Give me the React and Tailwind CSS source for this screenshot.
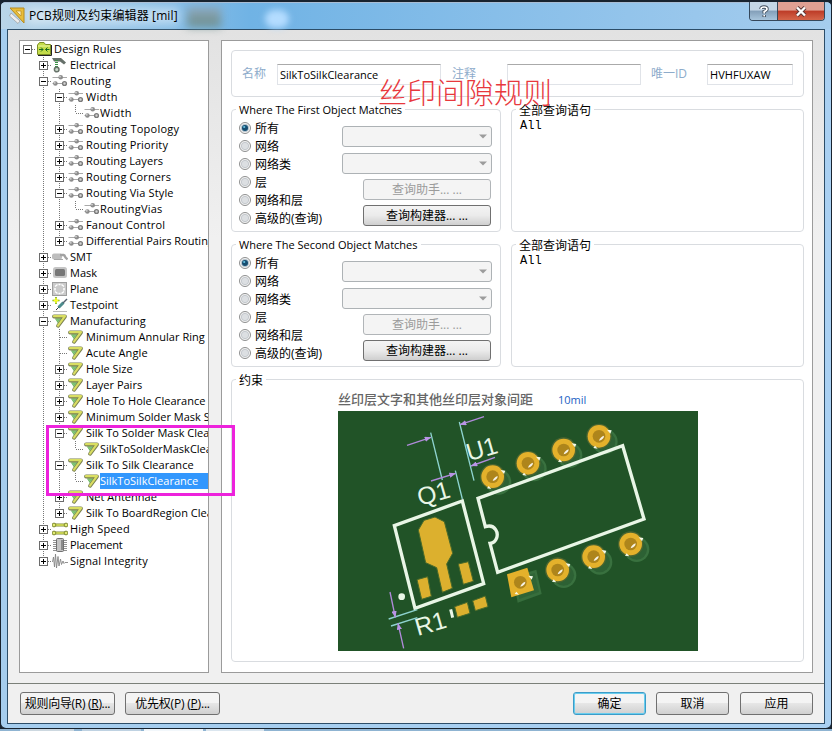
import React from "react";

const UI = "font-['Open_Sans','Noto_Sans_CJK_SC',sans-serif]";

/* [level, expander, icon, label, tracking class, selected] */
const rows = [
  [0, "-", "folder", "Design Rules", "tracking-[0.15px]"],
  [1, "+", "elec", "Electrical", ""],
  [1, "-", "route", "Routing", "tracking-[0.25px]"],
  [2, "-", "route", "Width", "tracking-[0.3px]"],
  [3, "", "route", "Width", "tracking-[0.3px]"],
  [2, "+", "route", "Routing Topology", "tracking-[0.25px]"],
  [2, "+", "route", "Routing Priority", "tracking-[0.15px]"],
  [2, "+", "route", "Routing Layers", "tracking-[0.1px]"],
  [2, "+", "route", "Routing Corners", "tracking-[0.13px]"],
  [2, "-", "route", "Routing Via Style", "tracking-[0.15px]"],
  [3, "", "route", "RoutingVias", "tracking-[0.2px]"],
  [2, "+", "route", "Fanout Control", "tracking-[0.18px]"],
  [2, "+", "route", "Differential Pairs Routing", ""],
  [1, "+", "smt", "SMT", ""],
  [1, "+", "mask", "Mask", ""],
  [1, "+", "plane", "Plane", ""],
  [1, "+", "test", "Testpoint", ""],
  [1, "-", "mfg", "Manufacturing", "tracking-[0.05px]"],
  [2, "", "mfg", "Minimum Annular Ring", "tracking-[0.05px]"],
  [2, "", "mfg", "Acute Angle", "tracking-[0.1px]"],
  [2, "+", "mfg", "Hole Size", ""],
  [2, "+", "mfg", "Layer Pairs", ""],
  [2, "+", "mfg", "Hole To Hole Clearance", ""],
  [2, "+", "mfg", "Minimum Solder Mask Sliver", ""],
  [2, "-", "mfg", "Silk To Solder Mask Clearance", ""],
  [3, "", "mfg", "SilkToSolderMaskClearance", ""],
  [2, "-", "mfg", "Silk To Silk Clearance", "tracking-[0.04px]"],
  [3, "", "mfg", "SilkToSilkClearance", "", true],
  [2, "+", "mfg", "Net Antennae", ""],
  [2, "+", "mfg", "Silk To BoardRegion Clearance", ""],
  [1, "+", "speed", "High Speed", "tracking-[0.15px]"],
  [1, "+", "place", "Placement", "tracking-[-0.15px]"],
  [1, "+", "signal", "Signal Integrity", "tracking-[0.12px]"],
];

const continues = (i, level) => {
  for (let k = i + 1; k < rows.length; k++) {
    if (rows[k][0] < level) return false;
    if (rows[k][0] === level) return true;
  }
  return false;
};

function Guide({ up, down, across, box }) {
  return (
    <svg width="16" height="16" viewBox="0 0 16 16" className="shrink-0" shapeRendering="crispEdges">
      {up && <path d="M7.5 0V8" stroke="#777" strokeDasharray="1 1" />}
      {down && <path d="M7.5 8V16" stroke="#777" strokeDasharray="1 1" />}
      {across && <path d="M8 8.5H16" stroke="#777" strokeDasharray="1 1" />}
      {box && (
        <>
          <rect x="3.5" y="4.5" width="8" height="8" fill="#fff" stroke="#6b6b6b" />
          <path d="M5 8.5H10" stroke="#000" />
          {box === "+" && <path d="M7.5 6V11" stroke="#000" />}
        </>
      )}
    </svg>
  );
}

function TreeIcon({ kind }) {
  return (
    <svg width="16" height="16" viewBox="0 0 16 16" className="shrink-0">
      {kind === "folder" && (
        <>
          <path d="M.5 4L2.500 1.500H7L8.500 3.500H13.500V13.500H.5Z" fill="#c3dc4a" stroke="#7d8f24" />
          <path d="M1 5H13" stroke="#eef9a0" />
          <path d="M14.500 4V14.500H1" stroke="#222" fill="none" />
          <path d="M2 8.500H6M12.500 8.500H8.500M4 6.500L6 8.500L4 10.500M10.500 6.500L8.500 8.500L10.500 10.500" stroke="#176a1c" fill="none" />
        </>
      )}
      {kind === "elec" && (
        <>
          <path d="M0 1H9L14 5.500L12 7.500L8 4.500H2Z" fill="#66706a" />
          <path d="M4.500 3V10" stroke="#379343" strokeWidth="3" strokeDasharray="1 1" />
          <circle cx="4.700" cy="12.500" r="2.300" fill="#c9d8ca" stroke="#68736a" strokeWidth="1.500" />
        </>
      )}
      {kind === "route" && (
        <>
          <path d="M.5 4.500H15M.5 10.500H15" stroke="#a9a9a9" />
          <circle cx="8.700" cy="4.300" r="2.300" fill="#8c8c8c" />
          <circle cx="8" cy="3.600" r=".9" fill="#d4d4d4" />
          <circle cx="3.400" cy="10.500" r="2.300" fill="#8c8c8c" />
          <circle cx="2.800" cy="9.800" r=".9" fill="#d4d4d4" />
          <circle cx="12.500" cy="10.500" r="1.900" fill="#d4d4d4" stroke="#7b7b7b" strokeWidth="1.400" />
        </>
      )}
      {kind === "smt" && (
        <>
          <rect x="0" y="4.500" width="10" height="6" rx="2" fill="#bdbdbd" />
          <path d="M8 6H11.500Q13 6.500 13.500 8.500L15.500 10.500" fill="none" stroke="#a2a2a2" strokeWidth="2.400" />
          <path d="M2 10.500H11" stroke="#a6a6a6" />
        </>
      )}
      {kind === "mask" && (
        <>
          <rect x="1" y="2" width="14" height="11" rx="2.500" fill="#c5c5c5" />
          <rect x="3" y="4" width="10" height="7" rx="1.500" fill="#777" />
        </>
      )}
      {kind === "plane" && (
        <>
          <rect x=".5" y="1.500" width="14" height="13" fill="#cacaca" stroke="#9e9e9e" />
          <path d="M5.500 3.500L3 5.500M3 7V9.500M3 10.500L5.500 12.500M9.500 3.500L12 5.500M12 7V9.500M12 10.500L9.500 12.500M6.500 3.500H8.500M6.500 12.500H8.500" fill="none" stroke="#fff" strokeWidth="1.500" />
        </>
      )}
      {kind === "test" && (
        <>
          <path d="M1 14.500H15" stroke="#bbb" />
          <path d="M4 13L7 10" stroke="#333" />
          <path d="M6.500 10.500L11.500 5.500" stroke="#4d8c8d" strokeWidth="3" />
          <path d="M11 6L15 2" stroke="#56606e" strokeWidth="1.500" />
          <path d="M4 0V7M.5 3.500H7.500" stroke="#62a900" strokeWidth="1.500" />
          <path d="M4 1V6M1.500 3.500H6.500" stroke="#ffff25" strokeWidth="1.500" />
        </>
      )}
      {kind === "mfg" && (
        <>
          <path d="M3 5H11L6 11Z" fill="#8fce82" />
          <path d="M2 3.500H13L6 12.800" fill="none" stroke="#7b8052" strokeWidth="3.800" strokeLinecap="round" strokeLinejoin="round" />
          <path d="M2 3.200H13L6 12.600" fill="none" stroke="#d9de62" strokeWidth="2.200" strokeLinecap="round" strokeLinejoin="round" />
          <path d="M3.500 6L6 9M5.500 6L7.200 8M7.500 6L8.500 7" stroke="#5fae5c" strokeWidth=".7" />
        </>
      )}
      {kind === "speed" && (
        <>
          <path d="M2 4H14M2 12H14" stroke="#7e8832" strokeWidth="3" />
          <path d="M2 4H14M2 12H14" stroke="#dbe65c" strokeWidth="1.600" />
          {[[2, 4], [14, 4], [2, 12], [14, 12]].map(([x, y]) => (
            <circle key={x + "-" + y} cx={x} cy={y} r="1.900" fill="#e2ec74" stroke="#7e8832" />
          ))}
        </>
      )}
      {kind === "place" && (
        <>
          <path d="M1 3.500H15M1 5.500H15M1 7.500H15M1 9.500H15M1 11.500H15M1 13.500H15" stroke="#777" strokeWidth=".8" />
          <rect x="4.500" y="1.500" width="7" height="13" rx="1" fill="#c4c4c4" stroke="#717171" />
          <path d="M10 3V13" stroke="#8b8b8b" strokeWidth="2" />
        </>
      )}
      {kind === "signal" && (
        <path d="M.5 9L1.500 4L2.500 14L3.500 1L4.500 15L6 3.500L7 13L8.500 6L9.500 11.500L11 8L12 10.500L13 9.500H16" fill="none" stroke="#858585" strokeWidth=".9" />
      )}
    </svg>
  );
}

function TreeRow({ row, index }) {
  const [level, box, icon, label, tracking, selected] = row;
  const ancestors = [];
  for (let l = 1; l < level; l++) ancestors.push(l);
  const tone = selected ? "h-4 w-[120px] bg-[#3297fd] text-white" : "text-black";
  const indent = level === 3 ? "" : level === 0 ? "pl-px" : "pl-0.5";
  return (
    <div className="flex h-4 w-[300px] items-center">
      {level > 0 && <span className="w-4 shrink-0" />}
      {ancestors.map((l) => (
        <Guide key={l} up={continues(index, l)} down={continues(index, l)} />
      ))}
      <Guide up={level > 0} down={level > 0 && continues(index, level)} across box={box} />
      {level === 0 && <span className="w-px shrink-0" />}
      <TreeIcon kind={icon} />
      <span className={"text-[11px] leading-4 whitespace-nowrap " + tone + " " + indent + " " + tracking}>{label}</span>
    </div>
  );
}

function Group({ title, className, children }) {
  return (
    <div className={"relative rounded-[4px] border border-[#d9dce0] " + className}>
      {title && (
        <span className="absolute -top-2 left-[4px] bg-white px-[3px] text-[11px] leading-4 whitespace-nowrap text-black">
          {title}
        </span>
      )}
      {children}
    </div>
  );
}

function Radio({ label, checked }) {
  return (
    <div className="flex h-[18px] items-center gap-[4px]">
      <svg width="12" height="12" viewBox="0 0 12 12">
        <circle cx="6" cy="6" r="5.500" fill="#f6f6f6" stroke="#8e8f8f" />
        <circle cx="6" cy="6" r="3.700" fill={checked ? "#9cc3da" : "#dcdfe2"} stroke="#b6bcc2" strokeWidth=".7" />
        {checked && <circle cx="6" cy="6" r="3" fill="#174d70" />}
        {checked && <circle cx="5.200" cy="5" r="1.100" fill="#65c3e3" />}
      </svg>
      <span className="pt-px text-[12px] leading-[18px] whitespace-nowrap text-black">{label}</span>
    </div>
  );
}

function Combo() {
  return (
    <div className="flex h-[21px] w-[150px] items-center justify-end rounded-[3px] border border-[#adb2b5] bg-[#f4f4f4] pr-1">
      <svg width="8" height="5" viewBox="0 0 8 5">
        <path d="M0 .5H8L4 4.500Z" fill="#9c9c9c" />
      </svg>
    </div>
  );
}

function MatchGroup({ title, className }) {
  return (
    <Group title={title} className={"flex w-[270px] " + className}>
      <div className="flex w-[110px] shrink-0 flex-col pt-[9px] pl-[7px]">
        <Radio label="所有" checked />
        <Radio label="网络" />
        <Radio label="网络类" />
        <Radio label="层" />
        <Radio label="网络和层" />
        <Radio label="高级的(查询)" />
      </div>
      <div className="flex shrink-0 flex-col pt-[16px]">
        <Combo />
        <div className="mt-[6px]">
          <Combo />
        </div>
        <div className="mt-[5px] ml-[21px] flex h-[21px] w-[128px] items-center justify-center rounded-[3px] border border-[#b1b5b8] bg-[#f4f4f4] text-[12px] text-[#9b9b9b]">
          查询助手... ...
        </div>
        <div className="mt-[5px] ml-[21px] flex h-[21px] w-[128px] items-center justify-center rounded-[3px] border border-[#707070] bg-linear-to-b from-[#f4f4f4] via-[#ebebeb] to-[#cfcfcf] text-[12px] text-black">
          查询构建器... ...
        </div>
      </div>
    </Group>
  );
}

function QueryGroup({ className }) {
  return (
    <Group className={"w-[293px] " + className}>
      <span className="absolute -top-2 left-[4px] bg-white px-[3px] text-[12px] leading-[18px] text-black">全部查询语句</span>
      <div className="pt-[8px] pl-[8px] font-['Liberation_Mono',monospace] text-[12px] leading-4 text-black">All</div>
    </Group>
  );
}

function Pad({ x, y, square }) {
  return (
    <g transform={`translate(${x} ${y})`}>
      {square ? (
        <>
          <path d="M-22 -17L48 -38L64 35L-8 61Z" fill="#376e3d" />
          <path d="M-14 -11L43 -28L56 29L-3 50Z" fill="#2f6436" />
          <path d="M-40 -24L21 -44L41 24L-27 45Z" fill="#e4b12b" />
        </>
      ) : (
        <>
          <circle cx="18" cy="16" r="38" fill="#39713f" />
          <circle cx="18" cy="16" r="31" fill="#2d6134" />
          <circle r="38" fill="#4b6530" />
          <circle r="34" fill="#e4b12b" />
        </>
      )}
      <path d="M24 -20L38 -18L34 -8ZM-17 35L-12 28L-4 37Z" fill="#f5fae8" />
      <circle r="19" fill="#ae851b" />
      <path d="M0 13Q3 2 15 -2Q15 9 0 13Z" fill="#f7f3e6" />
    </g>
  );
}

function Board() {
  return (
    <svg width="360" height="240" viewBox="24 93 1080 720" className="block bg-[#215327]">
      <defs>
        <marker id="arrow" viewBox="0 0 20 16" refX="19" refY="8" markerWidth="20" markerHeight="16" markerUnits="userSpaceOnUse" orient="auto">
          <path d="M0 0L20 8L0 16Z" fill="#b994e6" />
        </marker>
      </defs>
      <Pad x={488} y={290} />
      <Pad x={594} y={250} />
      <Pad x={701} y={210} />
      <Pad x={807} y={169} />
      <Pad x={571} y={607} square />
      <Pad x={683} y={570} />
      <Pad x={791} y={530} />
      <Pad x={902} y={492} />
      <path
        d="M444 355L878 197L942 417L503 577L480 490C500 488 507 464 497 449C490 438 478 436 466 440Z"
        fill="none"
        stroke="#e9f6e6"
        strokeWidth="10"
      />
      <path d="M193 437L397 363L461 611L255 685Z" fill="none" stroke="#e9f6e6" strokeWidth="10" />
      <g fill="#dcb02e" stroke="#4a6a2a" strokeWidth="3">
        <path d="M265 450L282 421L315 411L343 425L368 520L350 552L367 625L337 637L320 563L287 548Z" />
        <path d="M261 599L293 590L304 649L275 658Z" />
        <path d="M385 552L415 545L430 604L400 613Z" />
        <path d="M374 680L412 667L420 700L382 712Z" />
        <path d="M428 662L466 648L474 680L436 692Z" />
      </g>
      <circle cx="215" cy="650" r="10" fill="#e9f6e6" />
      <path d="M362 688L368 713" stroke="#e9f6e6" strokeWidth="9" />
      <g stroke="#8ed3cf" strokeWidth="4">
        <path d="M302 158L337 300M388 126L432 302M376 272L397 357M176 717L262 689M183 738L262 713" />
      </g>
      <g stroke="#b18bdc" strokeWidth="4">
        <path d="M231 196L303 172" markerEnd="url(#arrow)" />
        <path d="M462 110L390 134" markerEnd="url(#arrow)" />
        <path d="M303 303L377 280" markerEnd="url(#arrow)" />
        <path d="M495 232L423 258" markerEnd="url(#arrow)" />
        <path d="M180 636L196 712" markerEnd="url(#arrow)" />
        <path d="M221 805L204 730" markerEnd="url(#arrow)" />
      </g>
      <g fill="#e9f6e6" className="font-['Liberation_Sans',Arial,sans-serif] text-[74px]">
        <text transform="translate(270 378) rotate(-16)">Q1</text>
        <text transform="translate(417 244) rotate(-16)">U1</text>
        <text transform="translate(263 768) rotate(-16)">R1</text>
      </g>
    </svg>
  );
}

function Button({ className, children }) {
  return (
    <button
      className={
        "flex h-[23px] shrink-0 items-center justify-center rounded-[3px] border bg-linear-to-b from-[#f4f4f4] from-45% via-[#e6e6e6] via-50% to-[#d0d0d0] text-[12px] whitespace-nowrap text-black " +
        className
      }
    >
      <span>{children}</span>
    </button>
  );
}

export default function App() {
  return (
    <div className={"relative flex h-[731px] w-[832px] flex-col overflow-hidden bg-[#18232f] " + UI}>
      <div className="flex h-[729px] w-[832px] shrink-0 flex-col overflow-hidden rounded-[6px] border border-t-2 border-[#18232f] bg-linear-to-r from-[#a5cdee] to-[#a9d0f2]">
        <header className="relative flex h-[27px] shrink-0 items-start justify-between border-t border-[#a9bdd4] bg-linear-to-r from-[#b9d5e8] via-[#70b3e5] via-30% to-[#a5cdee] pr-[6px] pl-[8px]">
          <div className="absolute top-[4px] left-[186px] h-[20px] w-[34px] bg-linear-to-b from-[#8fa9bf] to-[#6b8c88] blur-[4px]" />
          <div className="absolute top-[7px] left-[264px] h-[18px] w-[24px] rounded-full bg-[#b4dcff] blur-[3px]" />
          <div className="absolute top-[5px] left-[26px] h-[16px] w-[152px] bg-white/45 blur-[5px]" />
          <div className="relative flex h-[25px] items-center gap-[4px]">
            <svg width="16" height="17" viewBox="0 0 16 17">
              <path d="M1 1H15V16Z" fill="#e8bd38" stroke="#b78b20" />
              <path d="M7 4H12V9Z" fill="#fff1b8" stroke="#b78b20" strokeWidth=".7" />
              <path d="M2 6L11 14L9 16.500L.5 9Z" fill="#eee" stroke="#999" strokeWidth=".7" />
            </svg>
            <span className="pt-px text-[12px] leading-[18px] tracking-[0.12px] whitespace-nowrap text-black">PCB规则及约束编辑器 [mil]</span>
          </div>
          <div className="relative -mt-px flex h-[19px] w-[76px] overflow-hidden rounded-b-[4px] border border-t-0 border-[#35485b]">
            <div className="flex w-[28px] items-center justify-center border-r border-[#35485b] bg-linear-to-b from-[#c4d7e7] from-45% via-[#839fb9] via-50% to-[#a8c5dc]">
              <svg width="10" height="13" viewBox="0 0 10 13">
                <path d="M2 4Q2 2 5 2Q8 2 8 4Q8 5.500 5.200 6.500V8.500M5.200 10V12" fill="none" stroke="#3f4c5b" strokeWidth="3.400" />
                <path d="M2 4Q2 2 5 2Q8 2 8 4Q8 5.500 5.200 6.500V8.500M5.200 10V11.500" fill="none" stroke="#fff" strokeWidth="1.700" />
              </svg>
            </div>
            <div className="flex flex-1 items-center justify-center bg-linear-to-b from-[#e0a093] from-45% via-[#bd3b27] via-50% to-[#d4654a]">
              <svg width="12" height="11" viewBox="0 0 12 11">
                <path d="M2 1.500L10 9.500M10 1.500L2 9.500" stroke="#5a3535" strokeWidth="4.200" />
                <path d="M2 1.500L10 9.500M10 1.500L2 9.500" stroke="#fff" strokeWidth="2.400" />
              </svg>
            </div>
          </div>
        </header>

        <div className="mr-[6px] ml-[6px] flex h-[695px] shrink-0 flex-col border border-[#2c4d68] bg-linear-to-b from-[#e2e2e2] to-[#f0f0f0] to-30%">
          <main className="flex h-[654px] shrink-0 gap-[12px] border-b border-[#7b8079] pt-[10px] pl-[11px]">
            <div className="flex h-[633px] w-[190px] shrink-0 flex-col overflow-hidden border border-[#9b9b9b] bg-white">
              {rows.map((r, i) => (
                <TreeRow key={i} row={r} index={i} />
              ))}
            </div>

            <div className="flex h-[633px] w-[592px] shrink-0 flex-col border border-[#9b9b9b] bg-white pt-[9px] pl-[9px]">
              <Group className="flex h-[47px] w-[573px] shrink-0 items-center pt-px pl-[10px] text-[12px]">
                <span className="w-[35px] shrink-0 text-[#8eaccb]">名称</span>
                <div className="h-[21px] w-[164px] shrink-0 border border-[#e0e3e8] border-t-[#aaa] pl-[2px] text-[11px] leading-[19px] text-black">
                  SilkToSilkClearance
                </div>
                <span className="ml-[11px] w-[55px] shrink-0 text-[#8eaccb]">注释</span>
                <div className="h-[21px] w-[134px] shrink-0 border border-[#e0e3e8] border-t-[#aaa]" />
                <span className="ml-[10px] w-[56px] shrink-0 text-[#8eaccb]">唯一ID</span>
                <div className="h-[21px] w-[86px] shrink-0 border border-[#e0e3e8] border-t-[#aaa] pl-[2px] text-[11px] leading-[19px] tracking-[0.1px] text-black">
                  HVHFUXAW
                </div>
              </Group>
              <div className="mt-[12px] flex gap-[10px]">
                <MatchGroup title="Where The First Object Matches" className="h-[123px]" />
                <QueryGroup className="h-[123px]" />
              </div>
              <div className="mt-[12px] flex gap-[10px]">
                <MatchGroup title="Where The Second Object Matches" className="h-[123px]" />
                <QueryGroup className="h-[123px]" />
              </div>
              <Group className="mt-[12px] h-[283px] w-[573px] pl-[106px]">
                <span className="absolute -top-2 left-[4px] bg-white px-[3px] text-[12px] leading-[18px] text-black">约束</span>
                <div className="flex h-[31px] items-center gap-[25px] pt-[8px]">
                  <span className="text-[13px] font-medium whitespace-nowrap text-[#666]">丝印层文字和其他丝印层对象间距</span>
                  <span className="pt-px text-[11px] text-[#1c62c4]">10mil</span>
                </div>
                <Board />
              </Group>
            </div>
          </main>

          <footer className="flex h-[39px] items-start pt-[8px] pl-[12px]">
            <Button className="w-[95px] border-[#707070] tracking-[-0.3px]">
              规则向导(R) (<u>R</u>)...
            </Button>
            <Button className="ml-[10px] w-[95px] border-[#707070] tracking-[-0.2px]">
              优先权(P) (<u>P</u>)...
            </Button>
            <Button className="ml-[353px] w-[73px] border-[#3c9cc8] shadow-[inset_0_0_0_1px_#68cdee]">确定</Button>
            <Button className="ml-[10px] w-[73px] border-[#707070]">取消</Button>
            <Button className="ml-[11px] w-[73px] border-[#707070]">应用</Button>
          </footer>
        </div>
      </div>
      <div className="flex h-[2px] w-full gap-[3px] bg-[#8fb4d2] pl-[20px]">
        <div className="w-[54px] bg-[#cdd8e0]" />
        <div className="ml-[5px] w-[59px] bg-[#bfd2e2]" />
        <div className="w-[59px] bg-[#f2f7fb]" />
        <div className="w-[58px] bg-[#dbe6ef]" />
      </div>

      <div className="pointer-events-none absolute top-[425px] left-[46px] h-[71px] w-[189px] border-[3px] border-[#ed22dc]" />
      <div className="absolute top-[73px] left-[378px] font-['Noto_Sans_CJK_SC',sans-serif] text-[29px] leading-[36px] font-light whitespace-nowrap text-[#e8383d]">
        丝印间隙规则
      </div>
    </div>
  );
}
